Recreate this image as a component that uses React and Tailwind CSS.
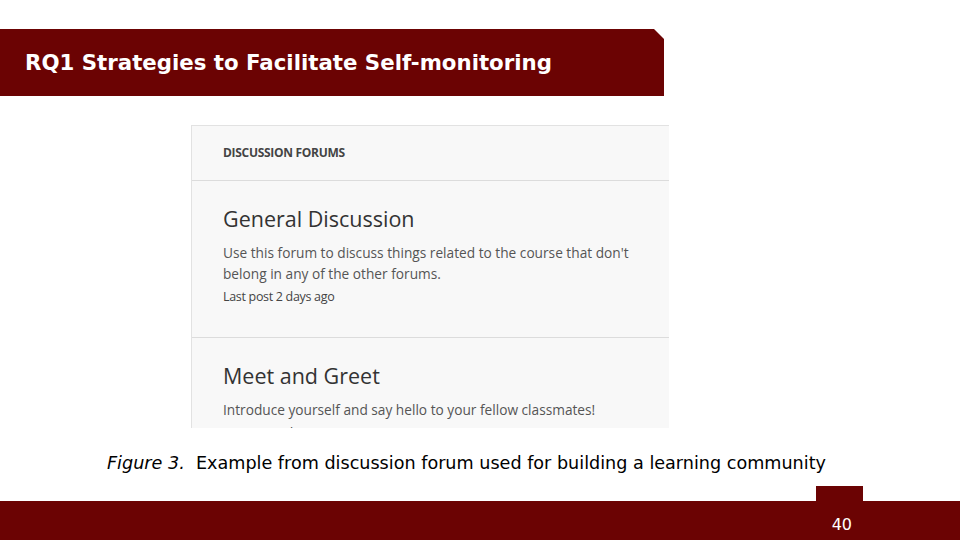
import React from 'react';

const forums = [
  {
    title: 'General Discussion',
    desc: "Use this forum to discuss things related to the course that don't belong in any of the other forums.",
    last: 'Last post 2 days ago',
  },
  {
    title: 'Meet and Greet',
    desc: 'Introduce yourself and say hello to your fellow classmates!',
    last: 'Last post 2 days ago',
  },
];

export default function App() {
  return (
    <div className="w-[960px] h-[540px] bg-white flex flex-col overflow-hidden font-['DejaVu_Sans',sans-serif]">
      {/* Title bar */}
      <div className="mt-[29px] w-[664px] h-[67px] bg-[#6b0303] flex items-center pl-[25px] [clip-path:polygon(0_0,654px_0,664px_10px,664px_100%,0_100%)]">
        <h1 className="text-white font-bold text-[21.3px] leading-none">RQ1 Strategies to Facilitate Self-monitoring</h1>
      </div>

      {/* Forum screenshot */}
      <div className="mt-[29px] ml-[191px] w-[478px] h-[303px] overflow-hidden bg-[#f8f8f8] border-l border-t border-[#e2e2e2] font-['Open_Sans',sans-serif]">
        <div className="h-[55px] flex items-center pl-[31px] border-b border-[#dcdcdc]">
          <span className="text-[12px] font-bold text-[#444] tracking-tight">DISCUSSION FORUMS</span>
        </div>
        {forums.map((f, i) => (
          <div key={i} className="pl-[31px] pr-[30px] pt-[23px] h-[157px] border-b border-[#dcdcdc]">
            <div className="text-[21.5px] text-[#333] leading-[30px]">{f.title}</div>
            <p className="mt-[8px] text-[13.7px] text-[#555] leading-[21px]">{f.desc}</p>
            <div className="mt-[3px] text-[12.5px] text-[#444] leading-[20px] tracking-tight">{f.last}</div>
          </div>
        ))}
      </div>

      {/* Caption */}
      <div className="mt-[24px] pl-[107px] text-[17.6px] text-black leading-[22px] whitespace-pre">
        <span className="italic">Figure 3.</span>  Example from discussion forum used for building a learning community
      </div>

      {/* Footer */}
      <div className="mt-auto flex flex-col">
        <div className="self-end mr-[97px] w-[47px] h-[15px] bg-[#6b0303]" />
        <div className="h-[39px] bg-[#6b0303] flex items-end justify-end pr-[108px] pb-[7px]">
          <span className="text-white text-[16px] leading-none">40</span>
        </div>
      </div>
    </div>
  );
}
